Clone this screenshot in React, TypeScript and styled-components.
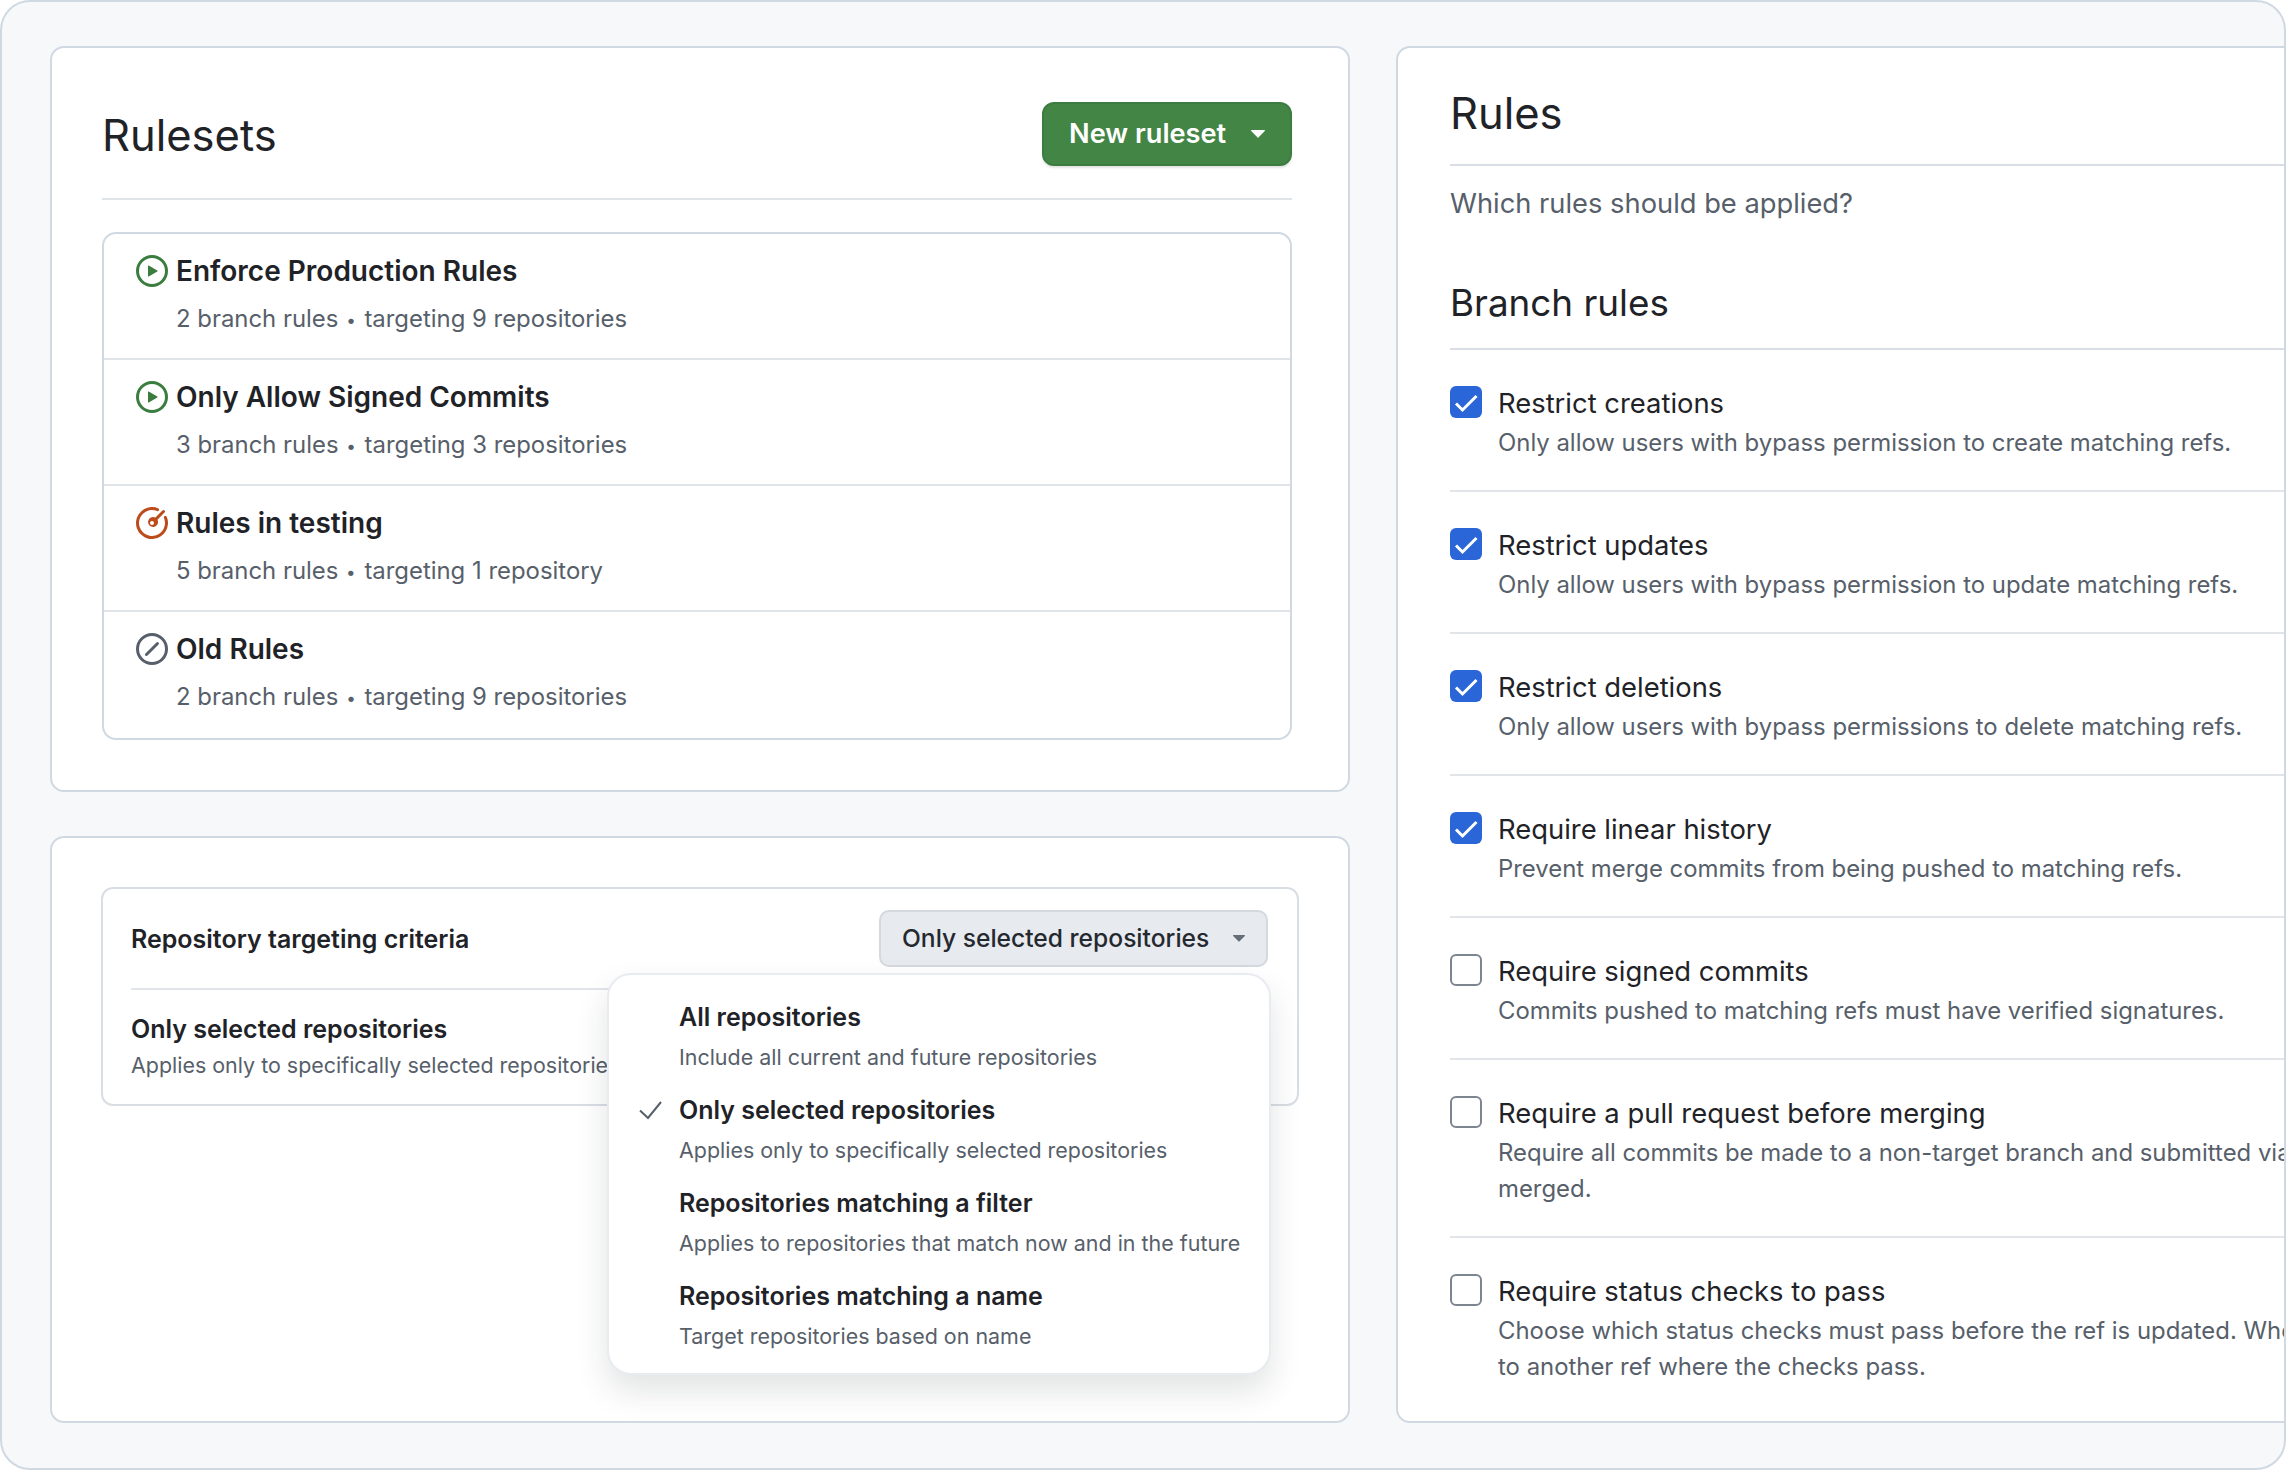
import React from "react";
import styled, { createGlobalStyle } from "styled-components";

const Global = createGlobalStyle`
  html, body { margin: 0; padding: 0; background: #ffffff; }
  body { font-family: Inter, "Liberation Sans", sans-serif; -webkit-font-smoothing: antialiased; }
  * { box-sizing: border-box; }
`;

const Frame = styled.div`
  width: 2286px;
  height: 1470px;
  border: 2px solid #d0d9e2;
  border-radius: 30px;
  background: #f6f8fa;
  padding: 44px 0 45px 48px;
  display: flex;
  gap: 46px;
  overflow: hidden;
`;

const LeftColumn = styled.div`
  width: 1300px;
  flex-shrink: 0;
  display: flex;
  flex-direction: column;
  gap: 44px;
`;

const Card = styled.section`
  background: #ffffff;
  border: 2px solid #d0d9e2;
  border-radius: 14px;
`;

const RulesetsCard = styled(Card)`
  padding: 0 56px 50px 50px;
`;

const CardHeader = styled.header`
  display: flex;
  justify-content: space-between;
  align-items: center;
  padding: 54px 0 32px;
  border-bottom: 2px solid #dfe4e9;
  margin-bottom: 32px;
`;

const PageTitle = styled.h1`
  margin: 0;
  padding-top: 2px;
  font-size: 43.5px;
  line-height: 62px;
  font-weight: 400;
  color: #1f2328;
`;

const PrimaryButton = styled.button`
  display: flex;
  align-items: center;
  justify-content: space-between;
  width: 250px;
  height: 64px;
  padding: 0 25px;
  border: 2px solid #3d7c40;
  border-radius: 12px;
  background: #438545;
  color: #ffffff;
  font: 600 27.2px/1 Inter, sans-serif;
  box-shadow: 0 2px 2px rgba(31, 35, 40, 0.12);
`;

const Caret = styled.svg`
  flex-shrink: 0;
  fill: currentColor;
`;

const RulesetList = styled.div`
  border: 2px solid #d0d9e2;
  border-radius: 14px;
`;

const Ruleset = styled.div`
  display: grid;
  grid-template-columns: 32px 1fr;
  column-gap: 8px;
  padding: 19px 32px 21px;
  border-bottom: 2px solid #dfe4e9;
  &:last-child {
    border-bottom: 0;
    padding-bottom: 23px;
  }
`;

const StatusIcon = styled.svg<{ $color: string }>`
  width: 32px;
  height: 32px;
  margin-top: 2px;
  fill: ${(p) => p.$color};
`;

const RulesetName = styled.div`
  font-size: 28px;
  line-height: 36px;
  font-weight: 600;
  color: #1f2328;
`;

const RulesetMeta = styled.div`
  grid-column: 2;
  margin-top: 12px;
  font-size: 23.9px;
  line-height: 36px;
  color: #57606a;
`;

const Bullet = styled.span`
  font-size: 17px;
  line-height: 0;
  margin: 0 2px 0 1px;
  vertical-align: 1px;
`;

const TargetCard = styled(Card)`
  flex: 1;
  padding: 49px;
`;

const TargetBox = styled.div`
  position: relative;
  border: 2px solid #d8dee4;
  border-radius: 12px;
  padding: 0 28px 21px;
`;

const TargetHeader = styled.div`
  display: flex;
  justify-content: space-between;
  align-items: center;
  padding: 21px 1px 21px 0;
  border-bottom: 2px solid #e1e4e8;
  margin-bottom: 21px;
`;

const BoldLabel = styled.div`
  font-size: 25px;
  line-height: 36px;
  font-weight: 600;
  color: #1f2328;
`;

const SelectButton = styled.button`
  display: flex;
  align-items: center;
  justify-content: space-between;
  width: 389px;
  height: 57px;
  padding: 0 21px;
  border: 2px solid #d4d9df;
  border-radius: 10px;
  background: #e7eaee;
  color: #24292f;
  font: 500 24.6px/1 Inter, sans-serif;
`;

const SelectCaret = styled(Caret)`
  color: #656d76;
`;

const SmallNote = styled.div`
  font-size: 21.45px;
  line-height: 36px;
  color: #57606a;
  white-space: nowrap;
`;

const Menu = styled.div`
  position: absolute;
  top: 84px;
  right: 26px;
  width: 664px;
  height: 402px;
  padding: 24px 0 0;
  background: #ffffff;
  border: 2px solid #e8ebef;
  border-radius: 24px;
  box-shadow: 0 16px 32px rgba(31, 35, 40, 0.13);
`;

const MenuItem = styled.div`
  display: grid;
  grid-template-columns: 24px 1fr;
  align-content: start;
  column-gap: 16px;
  height: 93px;
  padding-left: 30px;
`;

const MenuCheck = styled.svg`
  width: 24px;
  height: 24px;
  margin-top: 6px;
  fill: none;
  stroke: #57606a;
  stroke-width: 2;
`;

const MenuTitle = styled.div`
  grid-column: 2;
  font-size: 25px;
  line-height: 36px;
  font-weight: 600;
  color: #1f2328;
`;

const MenuDesc = styled.div`
  grid-column: 2;
  margin-top: 4px;
  font-size: 21.45px;
  line-height: 36px;
  color: #57606a;
`;

const RulesCard = styled(Card)`
  width: 1000px;
  flex-shrink: 0;
  padding: 0 0 0 52px;
`;

const RulesTitle = styled.h1`
  margin: 0;
  padding: 33px 0 19px;
  font-size: 43.5px;
  line-height: 64px;
  font-weight: 400;
  color: #1f2328;
  border-bottom: 2px solid #d8dee4;
`;

const RulesIntro = styled.p`
  margin: 0;
  padding-top: 18px;
  font-size: 27.3px;
  line-height: 40px;
  color: #57606a;
`;

const SectionTitle = styled.h2`
  margin: 0;
  padding: 51px 0 17px;
  font-size: 36.8px;
  line-height: 56px;
  font-weight: 400;
  color: #1f2328;
  border-bottom: 2px solid #d8dee4;
`;

const Rule = styled.div`
  display: grid;
  grid-template-columns: 32px 1fr;
  column-gap: 16px;
  padding: 35px 0 29px;
  border-bottom: 2px solid #e1e4e8;
  &:last-child { border-bottom: 0; }
`;

const Checkbox = styled.span<{ $checked: boolean }>`
  display: flex;
  width: 32px;
  height: 32px;
  margin-top: 1px;
  border-radius: 6px;
  background: ${(p) => (p.$checked ? "#2b66d9" : "#ffffff")};
  border: ${(p) => (p.$checked ? "0" : "2px solid #7d8590")};
`;

const CheckMark = styled.svg`
  width: 32px;
  height: 32px;
  fill: none;
  stroke: #ffffff;
  stroke-width: 3;
`;

const RuleLabel = styled.div`
  font-size: 27.4px;
  line-height: 36px;
  color: #1f2328;
`;

const RuleDesc = styled.div`
  grid-column: 2;
  margin-top: 4px;
  font-size: 23.9px;
  line-height: 36px;
  color: #57606a;
  white-space: nowrap;
`;

const PLAY = "M8 0a8 8 0 1 1 0 16A8 8 0 0 1 8 0ZM1.5 8a6.5 6.5 0 1 0 13 0 6.5 6.5 0 0 0-13 0Zm4.879-2.773 4.264 2.559a.25.25 0 0 1 0 .428l-4.264 2.559A.25.25 0 0 1 6 10.559V5.442a.25.25 0 0 1 .379-.215Z";
const METER = "M8 1.5a6.5 6.5 0 1 0 6.016 4.035.75.75 0 0 1 1.388-.57 8 8 0 1 1-4.37-4.37.75.75 0 0 1-.569 1.389A6.473 6.473 0 0 0 8 1.5Zm6.28.22a.75.75 0 0 1 0 1.06l-3.54 3.54a2.5 2.5 0 1 1-1.06-1.06l3.54-3.54a.75.75 0 0 1 1.06 0ZM7 8a1 1 0 1 0 2 0 1 1 0 0 0-2 0Z";
const SKIP = "M8 0a8 8 0 1 1 0 16A8 8 0 0 1 8 0ZM1.5 8a6.5 6.5 0 1 0 13 0 6.5 6.5 0 0 0-13 0Zm9.78-2.22-5.5 5.5a.749.749 0 0 1-1.275-.326.749.749 0 0 1 .215-.734l5.5-5.5a.751.751 0 0 1 1.042.018.751.751 0 0 1 .018 1.042Z";

const rulesets = [
  { name: "Enforce Production Rules", count: "2 branch rules", target: "targeting 9 repositories", icon: PLAY, color: "#3a7d3e" },
  { name: "Only Allow Signed Commits", count: "3 branch rules", target: "targeting 3 repositories", icon: PLAY, color: "#3a7d3e" },
  { name: "Rules in testing", count: "5 branch rules", target: "targeting 1 repository", icon: METER, color: "#bc4c1c" },
  { name: "Old Rules", count: "2 branch rules", target: "targeting 9 repositories", icon: SKIP, color: "#57606a" },
];

const menuItems = [
  { title: "All repositories", desc: "Include all current and future repositories" },
  { title: "Only selected repositories", desc: "Applies only to specifically selected repositories", checked: true },
  { title: "Repositories matching a filter", desc: "Applies to repositories that match now and in the future" },
  { title: "Repositories matching a name", desc: "Target repositories based on name" },
];

const rules: { label: string; desc: React.ReactNode; checked: boolean }[] = [
  { label: "Restrict creations", desc: "Only allow users with bypass permission to create matching refs.", checked: true },
  { label: "Restrict updates", desc: "Only allow users with bypass permission to update matching refs.", checked: true },
  { label: "Restrict deletions", desc: "Only allow users with bypass permissions to delete matching refs.", checked: true },
  { label: "Require linear history", desc: "Prevent merge commits from being pushed to matching refs.", checked: true },
  { label: "Require signed commits", desc: "Commits pushed to matching refs must have verified signatures.", checked: false },
  {
    label: "Require a pull request before merging",
    desc: (<>Require all commits be made to a non-target branch and submitted via a pull request before they can be<br />merged.</>),
    checked: false,
  },
  {
    label: "Require status checks to pass",
    desc: (<>Choose which status checks must pass before the ref is updated. When enabled, commits must first be pushed<br />to another ref where the checks pass.</>),
    checked: false,
  },
];

export default function App() {
  return (
    <>
      <Global />
      <Frame>
        <LeftColumn>
          <RulesetsCard>
            <CardHeader>
              <PageTitle>Rulesets</PageTitle>
              <PrimaryButton>
                New ruleset
                <Caret width="14" height="8" viewBox="0 0 14 8"><path d="M0.6 0h12.8c.5 0 .8.6.4 1L7.4 7.6a.6.6 0 0 1-.8 0L.2 1C-.2.6.1 0 .6 0Z" /></Caret>
              </PrimaryButton>
            </CardHeader>
            <RulesetList>
              {rulesets.map((r) => (
                <Ruleset key={r.name}>
                  <StatusIcon $color={r.color} viewBox="0 0 16 16"><path fillRule="evenodd" d={r.icon} /></StatusIcon>
                  <RulesetName>{r.name}</RulesetName>
                  <RulesetMeta>{r.count} <Bullet>•</Bullet> {r.target}</RulesetMeta>
                </Ruleset>
              ))}
            </RulesetList>
          </RulesetsCard>
          <TargetCard>
            <TargetBox>
              <TargetHeader>
                <BoldLabel>Repository targeting criteria</BoldLabel>
                <SelectButton>
                  Only selected repositories
                  <SelectCaret width="12" height="7" viewBox="0 0 14 8"><path d="M0.6 0h12.8c.5 0 .8.6.4 1L7.4 7.6a.6.6 0 0 1-.8 0L.2 1C-.2.6.1 0 .6 0Z" /></SelectCaret>
                </SelectButton>
              </TargetHeader>
              <BoldLabel>Only selected repositories</BoldLabel>
              <SmallNote>Applies only to specifically selected repositories</SmallNote>
              <Menu>
                {menuItems.map((m) => (
                  <MenuItem key={m.title}>
                    {m.checked ? (
                      <MenuCheck viewBox="0 0 24 24"><polyline points="1,12.5 9,20 22,4" /></MenuCheck>
                    ) : (
                      <span />
                    )}
                    <MenuTitle>{m.title}</MenuTitle>
                    <MenuDesc>{m.desc}</MenuDesc>
                  </MenuItem>
                ))}
              </Menu>
            </TargetBox>
          </TargetCard>
        </LeftColumn>
        <RulesCard>
          <RulesTitle>Rules</RulesTitle>
          <RulesIntro>Which rules should be applied?</RulesIntro>
          <SectionTitle>Branch rules</SectionTitle>
          {rules.map((r) => (
            <Rule key={r.label}>
              <Checkbox $checked={r.checked}>
                {r.checked && <CheckMark viewBox="0 0 32 32"><polyline points="6,17.5 12.5,24 26.5,10" /></CheckMark>}
              </Checkbox>
              <RuleLabel>{r.label}</RuleLabel>
              <RuleDesc>{r.desc}</RuleDesc>
            </Rule>
          ))}
        </RulesCard>
      </Frame>
    </>
  );
}
